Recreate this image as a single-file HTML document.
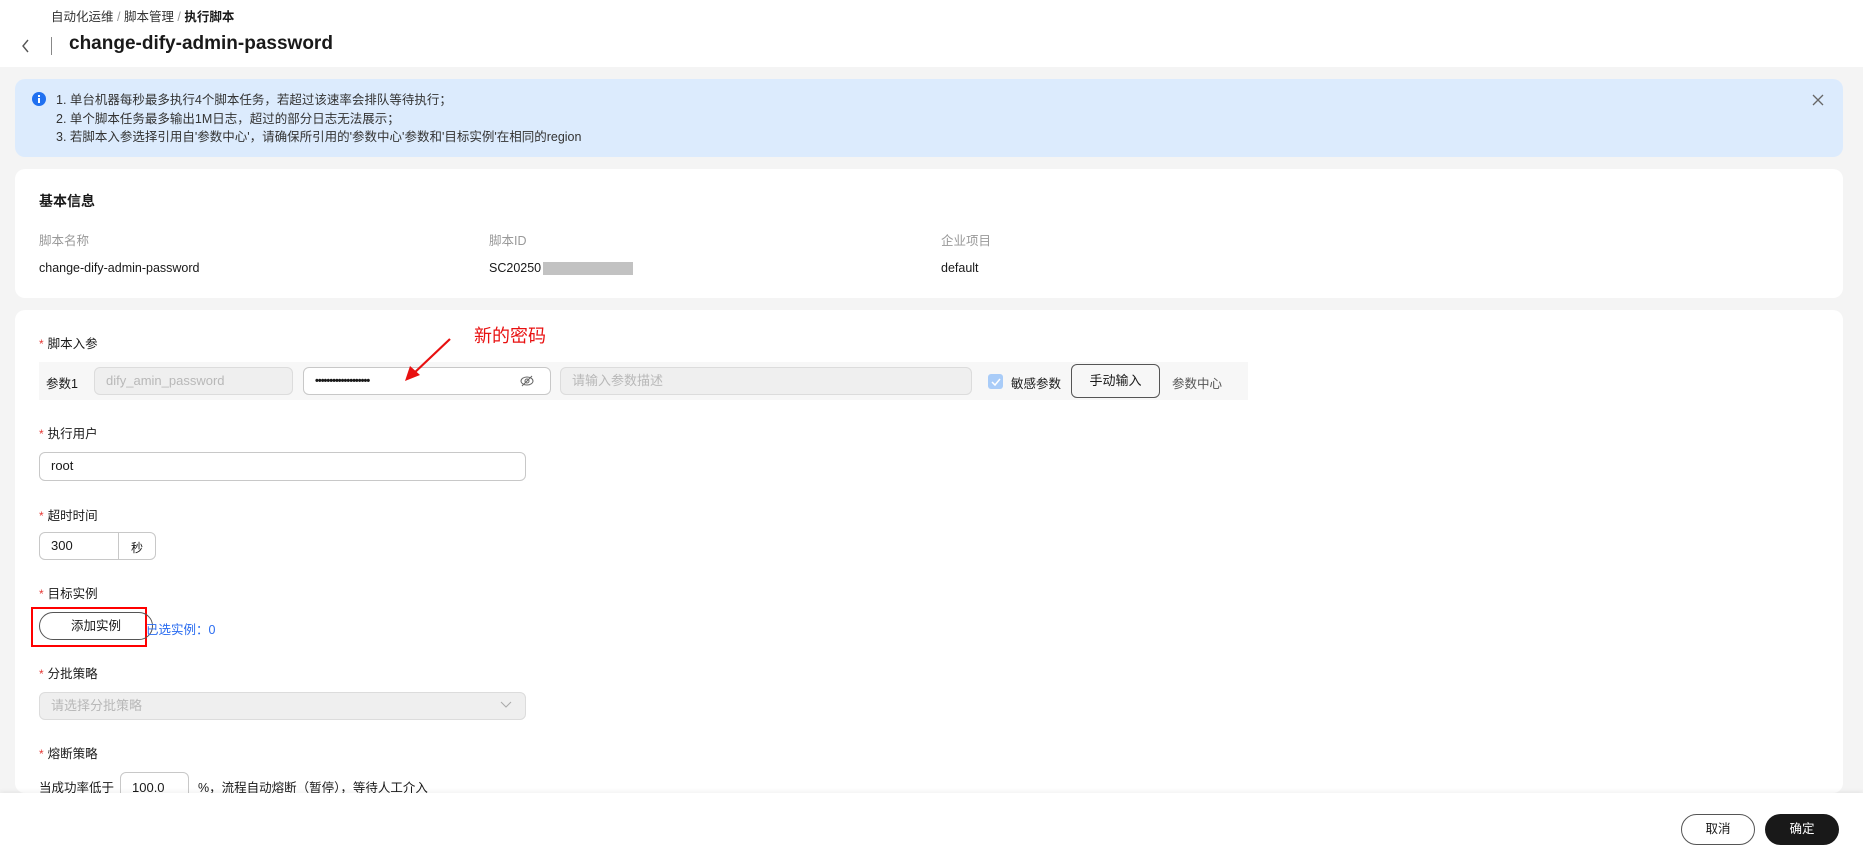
<!DOCTYPE html>
<html><head><meta charset="utf-8"><style>
*{box-sizing:border-box;margin:0;padding:0}
body{width:1863px;height:861px;overflow:hidden;background:#f4f4f4;font-family:"Liberation Sans","Noto Sans CJK SC",sans-serif;font-size:13px;color:#191919;position:relative}
.a{position:absolute}
.hdr{left:0;top:0;width:1863px;height:67px;background:#fff}
.card{background:#fff;border-radius:10px;left:15px;width:1828px}
.req{color:#e53935;margin-right:4px;font-size:12px}
.inp{position:absolute;border:1px solid #c8c8c8;border-radius:6px;background:#fff;height:28px;line-height:26px;padding-left:11px;font-size:13px}
.dis{background:#efefef;border-color:#dcdcdc;color:#b8b8b8}
</style></head><body>
<div class="a hdr"></div>
<div class="a" style="left:51px;top:6px;font-size:12.5px;color:#333">自动化运维 <span style="color:#999">/</span> 脚本管理 <span style="color:#999">/</span> <b style="color:#191919">执行脚本</b></div>
<svg class="a" style="left:20px;top:37px" width="12" height="18"><path d="M8 3L3 9l5 6" stroke="#555" stroke-width="1.4" fill="none"/></svg>
<div class="a" style="left:51px;top:37px;width:1px;height:18px;background:#888"></div>
<div class="a" style="left:69px;top:33px;font-size:19px;font-weight:bold">change-dify-admin-password</div>

<div class="a" style="left:15px;top:79px;width:1828px;height:78px;background:#dcebfd;border-radius:10px"></div>
<svg class="a" style="left:32px;top:92px" width="14" height="14"><circle cx="7" cy="7" r="7" fill="#2070f0"/><rect x="6" y="6" width="2" height="5" fill="#fff"/><rect x="6" y="3" width="2" height="2" fill="#fff"/></svg>
<div class="a" style="left:56px;top:91px;font-size:12.5px;line-height:18.5px;color:#333">1. 单台机器每秒最多执行4个脚本任务，若超过该速率会排队等待执行；<br>2. 单个脚本任务最多输出1M日志，超过的部分日志无法展示；<br>3. 若脚本入参选择引用自'参数中心'，请确保所引用的'参数中心'参数和'目标实例'在相同的region</div>
<svg class="a" style="left:1812px;top:94px" width="12" height="12"><path d="M1 1L11 11M11 1L1 11" stroke="#666" stroke-width="1.3"/></svg>

<div class="a card" style="top:169px;height:129px"></div>
<div class="a" style="left:39px;top:191px;font-size:14px;font-weight:bold">基本信息</div>
<div class="a" style="left:39px;top:230px;color:#999;font-size:12.5px">脚本名称</div>
<div class="a" style="left:489px;top:230px;color:#999;font-size:12.5px">脚本ID</div>
<div class="a" style="left:941px;top:230px;color:#999;font-size:12.5px">企业项目</div>
<div class="a" style="left:39px;top:261px;font-size:12.5px">change-dify-admin-password</div>
<div class="a" style="left:489px;top:261px;font-size:12.5px">SC20250</div>
<div class="a" style="left:543px;top:262px;width:90px;height:13px;background:#c2c2c2"></div>
<div class="a" style="left:941px;top:261px;font-size:12.5px">default</div>

<div class="a card" style="top:310px;height:483px"></div>
<div class="a" style="left:39px;top:333px;font-size:12.5px"><span class="req">*</span>脚本入参</div>
<div class="a" style="left:39px;top:362px;width:1209px;height:38px;background:#f7f7f7"></div>
<div class="a" style="left:46px;top:373px;font-size:12.5px">参数1</div>
<div class="inp dis" style="left:94px;top:367px;width:199px">dify_amin_password</div>
<div class="inp" style="left:303px;top:367px;width:248px;font-size:11px;letter-spacing:-1px;font-weight:bold">•••••••••••••••••••</div>
<svg class="a" style="left:520px;top:375px" width="14" height="12"><ellipse cx="7" cy="6" rx="6" ry="4" stroke="#666" fill="none"/><circle cx="7" cy="6" r="2" stroke="#666" fill="none"/><path d="M2 11L12 1" stroke="#666"/></svg>
<div class="inp dis" style="left:560px;top:367px;width:412px">请输入参数描述</div>
<div class="a" style="left:988px;top:374px;width:15px;height:15px;border-radius:3px;background:#a9ccf8"></div>
<svg class="a" style="left:988px;top:374px" width="15" height="15"><path d="M4 8l3 3 5-6" stroke="#fff" stroke-width="1.5" fill="none"/></svg>
<div class="a" style="left:1011px;top:373px;font-size:12.5px">敏感参数</div>
<div class="a" style="left:1071px;top:364px;width:89px;height:34px;border:1px solid #555;border-radius:6px;text-align:center;line-height:32px;font-size:13px">手动输入</div>
<div class="a" style="left:1172px;top:373px;font-size:12.5px;color:#555">参数中心</div>

<div class="a" style="left:474px;top:322px;font-size:18px;color:#e81010">新的密码</div>
<svg class="a" style="left:400px;top:335px" width="55" height="50"><path d="M50 4L12 40" stroke="#e81010" stroke-width="2.2"/><path d="M5 46L10 31 20 40Z" fill="#e81010"/></svg>

<div class="a" style="left:39px;top:423px;font-size:12.5px"><span class="req">*</span>执行用户</div>
<div class="inp" style="left:39px;top:452px;width:487px;height:29px">root</div>
<div class="a" style="left:39px;top:505px;font-size:12.5px"><span class="req">*</span>超时时间</div>
<div class="inp" style="left:39px;top:532px;width:117px">300</div>
<div class="a" style="left:118px;top:533px;width:1px;height:26px;background:#c8c8c8"></div>
<div class="a" style="left:131px;top:539px;font-size:12px">秒</div>
<div class="a" style="left:39px;top:583px;font-size:12.5px"><span class="req">*</span>目标实例</div>
<div class="a" style="left:31px;top:607px;width:116px;height:40px;border:2.5px solid #f00"></div>
<div class="a" style="left:39px;top:612px;width:114px;height:28px;border:1px solid #555;border-radius:14px;text-align:center;line-height:26px;font-size:12.5px">添加实例</div>
<div class="a" style="left:146px;top:619px;font-size:12.5px;color:#2a6cf0">已选实例：0</div>
<div class="a" style="left:39px;top:663px;font-size:12.5px"><span class="req">*</span>分批策略</div>
<div class="inp dis" style="left:39px;top:692px;width:487px;height:28px">请选择分批策略</div>
<svg class="a" style="left:500px;top:701px" width="12" height="8"><path d="M1 1l5 5 5-5" stroke="#aaa" fill="none"/></svg>
<div class="a" style="left:39px;top:743px;font-size:12.5px"><span class="req">*</span>熔断策略</div>
<div class="a" style="left:39px;top:777px;font-size:12.5px">当成功率低于</div>
<div class="inp" style="left:120px;top:772px;width:69px;height:32px;line-height:30px">100.0</div>
<div class="a" style="left:198px;top:777px;font-size:12.5px">%，流程自动熔断（暂停），等待人工介入</div>

<div class="a" style="left:0;top:793px;width:1863px;height:68px;background:#fff;box-shadow:0 -2px 4px rgba(0,0,0,0.05)"></div>
<div class="a" style="left:1681px;top:814px;width:74px;height:31px;border:1px solid #555;border-radius:16px;text-align:center;line-height:29px;font-size:12.5px">取消</div>
<div class="a" style="left:1765px;top:814px;width:74px;height:31px;background:#191919;color:#fff;border-radius:16px;text-align:center;line-height:31px;font-size:12.5px">确定</div>
</body></html>
